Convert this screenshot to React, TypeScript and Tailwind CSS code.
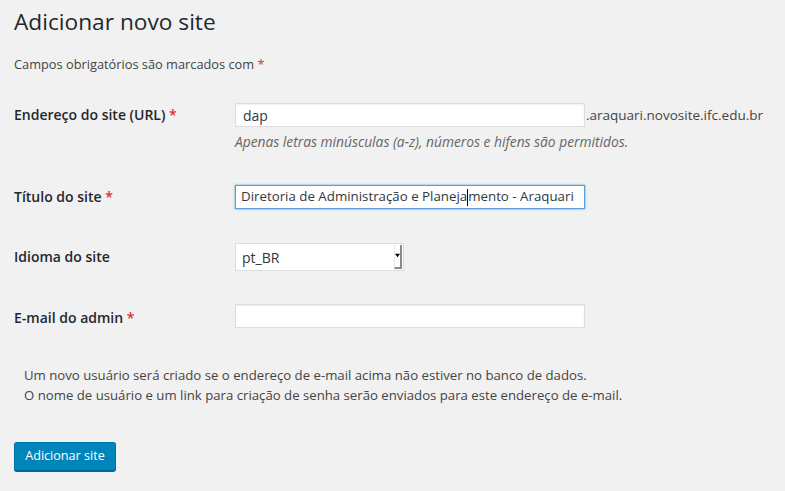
import React from "react";

const Req = () => <span className="text-[#dc3232]"> *</span>;

const Label = ({ children }: { children: React.ReactNode }) => (
  <div className="w-[221px] shrink-0 text-[14px] font-semibold leading-[24px] text-[#23282d]">
    {children}
  </div>
);

const App = () => {
  return (
    <div className="min-h-screen bg-[#f1f1f1] pl-[14px] font-['Open_Sans',sans-serif] text-[#444]">
      <h1 className="pt-[7px] text-[22.7px] leading-[29px] text-[#23282d]">
        Adicionar novo site
      </h1>
      <p className="mt-[19px] text-[12.8px] leading-[18px]">
        Campos obrigatórios são marcados com
        <span className="text-[#dc3232]"> *</span>
      </p>

      {/* URL */}
      <div className="mt-[30px] flex">
        <Label>
          Endereço do site (URL)
          <Req />
        </Label>
        <div>
          <div className="flex items-center">
            <div className="flex h-[24px] w-[350px] items-center border border-[#ddd] bg-white px-[7px] text-[14px] text-[#32373c] shadow-[inset_0_1px_2px_rgba(0,0,0,0.07)]">
              dap
            </div>
            <span className="pl-[1px] text-[13.5px] text-[#444]">
              .araquari.novosite.ifc.edu.br
            </span>
          </div>
          <p className="mt-[6px] text-[13.8px] italic leading-[18px] text-[#666]">
            Apenas letras minúsculas (a-z), números e hifens são permitidos.
          </p>
        </div>
      </div>

      {/* Titulo */}
      <div className="mt-[34px] flex">
        <Label>
          Título do site
          <Req />
        </Label>
        <div className="flex h-[24px] w-[350px] items-center whitespace-pre border border-[#5b9dd9] bg-white px-[5px] text-[13.3px] text-[#32373c] shadow-[0_0_2px_rgba(30,140,190,0.8)]">
          <span>Diretoria de Administração e Planeja</span>
          <span className="h-[17px] w-px bg-black" />
          <span>mento - Araquari</span>
        </div>
      </div>

      {/* Idioma */}
      <div className="mt-[34px] flex">
        <div className="flex h-[28px] items-center">
          <Label>Idioma do site</Label>
        </div>
        <div className="flex h-[28px] w-[169px] border border-[#ddd] bg-white">
          <span className="flex flex-1 items-center pl-[6px] text-[14px] text-[#32373c]">
            pt_BR
          </span>
          <div className="my-[1px] mr-[1px] flex w-[8px] items-start justify-center border-b-2 border-l border-r-2 border-b-[#8a8a8a] border-l-[#e5e5e5] border-r-[#8a8a8a] bg-white pt-[8px]">
            <svg width="7" height="5" viewBox="0 0 7 5">
              <path d="M0 0h7L3.5 5z" fill="#000" />
            </svg>
          </div>
        </div>
      </div>

      {/* Email */}
      <div className="mt-[33px] flex">
        <div className="flex h-[24px] items-center pt-[3px]">
          <Label>
            E-mail do admin
            <Req />
          </Label>
        </div>
        <div className="h-[24px] w-[350px] border border-[#ddd] bg-white shadow-[inset_0_1px_2px_rgba(0,0,0,0.07)]" />
      </div>

      <div className="mt-[37px] pl-[10px] text-[13.2px] leading-[20px]">
        <p>
          Um novo usuário será criado se o endereço de e-mail acima não estiver
          no banco de dados.
        </p>
        <p>
          O nome de usuário e um link para criação de senha serão enviados para
          este endereço de e-mail.
        </p>
      </div>

      <button className="mt-[37px] h-[29px] w-[102px] rounded-[3px] border border-[#0073aa] border-b-[#006799] bg-[#0085ba] text-[12.6px] text-white shadow-[0_1px_0_#006799]">
        Adicionar site
      </button>
    </div>
  );
};

export default App;
